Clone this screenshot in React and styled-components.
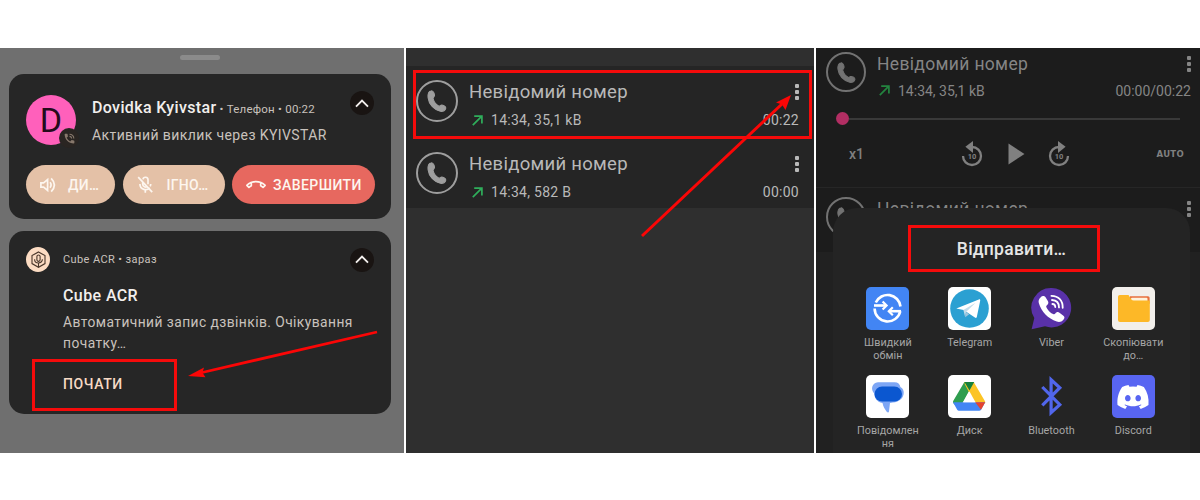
import styled, { createGlobalStyle } from "styled-components";
import { FaDiscord } from "react-icons/fa";
import { MdPhoneInTalk, MdOutlineCallEnd } from "react-icons/md";

const GlobalStyle = createGlobalStyle`
    * {
        box-sizing: border-box;
    }
    body {
        margin: 0;
        background: #ffffff;
        font-family: Roboto, "Liberation Sans", sans-serif;
    }
`;

const Page = styled.main`
    position: relative;
    width: 1200px;
    height: 500px;
    padding: 48px 0 47px;
    display: flex;
    gap: 2px;
    overflow: hidden;
`;

/* ---------- notifications ---------- */

const ShadePanel = styled.section`
    width: 404px;
    height: 405px;
    padding: 7px 13px 0 9px;
    background: #6f6f6f;
`;

const Handle = styled.div`
    width: 40px;
    height: 5px;
    margin: 0 auto 14px 171px;
    border-radius: 3px;
    background: #8b8b8b;
`;

const Card = styled.article`
    height: ${(props) => props.$height}px;
    margin-bottom: 12px;
    padding: 16px 16px 0 17px;
    border-radius: 15px;
    background: #262626;
    color: #c9c2bd;
`;

const CallHeader = styled.div`
    display: flex;
    padding-top: 5px;
    height: 75px;
`;

const Avatar = styled.div`
    position: relative;
    width: 50px;
    height: 50px;
    border-radius: 50%;
    background: #ff60bb;
    color: #260b1b;
    font-size: 34px;
    line-height: 50px;
    text-align: center;
    margin-right: 16px;
`;

const AvatarBadge = styled.span`
    position: absolute;
    left: 33px;
    top: 33px;
    width: 20px;
    height: 20px;
    border-radius: 50%;
    background: #2a2522;
    color: #87786c;
    display: flex;
    align-items: center;
    justify-content: center;
    font-size: 13px;
`;

const CallText = styled.div`
    flex: 1;
    white-space: nowrap;
`;

const Caller = styled.div`
    height: 26px;
    line-height: 26px;
    font-size: 11.5px;
    letter-spacing: 0.22px;
    strong {
        color: #f2efed;
        font-size: 16px;
        font-weight: 500;
        letter-spacing: 0.35px;
    }
`;

const CallInfo = styled.div`
    line-height: 28px;
    font-size: 14px;
    letter-spacing: 0.4px;
`;

const ChevronCircle = styled.span`
    width: 24px;
    height: 24px;
    margin: ${(props) => props.$top || 0}px 1px 0 auto;
    border-radius: 50%;
    background: #191412;
    display: flex;
    align-items: center;
    justify-content: center;
`;

const CallActions = styled.div`
    display: grid;
    grid-template-columns: 89px 102px 143px;
    column-gap: 7.5px;
`;

const CallButton = styled.button`
    height: 39px;
    border: 0;
    padding: 0 0 0 ${(props) => props.$pad}px;
    border-radius: 20px;
    background: ${(props) => (props.$danger ? "#e7685f" : "#e4c1a7")};
    color: #fdf6ef;
    display: flex;
    align-items: center;
    gap: ${(props) => props.$gap}px;
    font: 500 14px Roboto, sans-serif;
    letter-spacing: ${(props) => (props.$danger ? 0.45 : 0.3)}px;
    white-space: nowrap;
    svg {
        flex: none;
    }
`;

const AppHeader = styled.div`
    display: flex;
    height: 25px;
    line-height: 26px;
    align-items: center;
    font-size: 11px;
    letter-spacing: 0.4px;
`;

const AppIcon = styled.span`
    width: 24px;
    height: 25px;
    margin-right: 13px;
    border-radius: 50%;
    background: #fcdcc3;
    display: flex;
    align-items: center;
    justify-content: center;
`;

const AppBody = styled.div`
    padding-left: 37px;
    white-space: nowrap;
`;

const AppTitle = styled.div`
    margin-top: 12.5px;
    line-height: 22px;
    color: #f2efed;
    font-size: 16px;
    font-weight: 500;
    letter-spacing: 0.4px;
`;

const AppMessage = styled.p`
    margin: 5.5px 0 0;
    font-size: 13.8px;
    line-height: 21px;
    letter-spacing: 0.44px;
`;

const StartButton = styled.div`
    margin-top: 19px;
    line-height: 22px;
    color: #f7dac5;
    font-size: 14px;
    font-weight: 500;
    letter-spacing: 0.6px;
`;

/* ---------- recordings ---------- */

const ListPanel = styled.section`
    width: 408px;
    height: 405px;
    padding-top: 18px;
    background: #2f2f2f;
`;

const Recording = styled.div`
    height: ${(props) => props.$height || 72}px;
    padding: ${(props) => props.$pad || "14px 15px 0 10px"};
    display: flex;
    background: ${(props) => (props.$dim ? "#1c1c1c" : "#252525")};
    color: ${(props) => (props.$dim ? "#858585" : "#b9b9b9")};
`;

const PhoneCircle = styled.span`
    flex: none;
    width: ${(props) => props.$size}px;
    height: ${(props) => props.$size}px;
    border: 2px solid currentColor;
    border-radius: 50%;
    display: flex;
    align-items: center;
    justify-content: center;
    opacity: 0.82;
`;

const RecordingText = styled.div`
    flex: 1;
    margin-left: 11px;
    white-space: nowrap;
`;

const RecordingTitle = styled.div`
    display: flex;
    justify-content: space-between;
    height: 23px;
    line-height: 25px;
    font-size: ${(props) => (props.$dim ? 17.5 : 18.5)}px;
    letter-spacing: ${(props) => (props.$dim ? 0.33 : 0.28)}px;
`;

const RecordingMeta = styled.div`
    display: flex;
    align-items: center;
    margin-top: ${(props) => (props.$dim ? 2.5 : 4)}px;
    height: 26px;
    padding-left: ${(props) => (props.$dim ? 2 : 3)}px;
    font-size: 14px;
    letter-spacing: ${(props) => (props.$dim ? 0 : 0.28)}px;
    span {
        margin-left: 8px;
    }
    time {
        margin-left: auto;
    }
`;

const Dots = styled.span`
    display: flex;
    flex-direction: column;
    gap: 2px;
    margin-top: 4px;
    i {
        width: 4px;
        height: 4px;
        border-radius: 1px;
        background: currentColor;
    }
`;

/* ---------- player + share sheet ---------- */

const PlayerPanel = styled.section`
    position: relative;
    width: 384px;
    height: 405px;
    background: #212121;
    overflow: hidden;
`;

const Player = styled.div`
    height: 76px;
    padding: 0 20px;
    background: #1c1c1c;
    border-bottom: 1px solid #262626;
    color: #808080;
`;

const Track = styled.div`
    display: flex;
    align-items: center;
    height: 13px;
    &::before {
        content: "";
        width: 13px;
        height: 13px;
        border-radius: 50%;
        background: #b22e63;
    }
    &::after {
        content: "";
        flex: 1;
        height: 2px;
        background: #393939;
    }
`;

const Controls = styled.div`
    display: grid;
    grid-template-columns: 1fr 24px 19px 24px 1fr;
    column-gap: 22px;
    align-items: center;
    height: 58px;
    padding-left: 14px;
    font-size: 14px;
    font-weight: 500;
    > span {
        margin-left: -1px;
    }
    em {
        font: 700 8.5px "DejaVu Sans", sans-serif;
        letter-spacing: 0.3px;
        text-align: right;
        margin-right: -4px;
    }
`;

const Sheet = styled.div`
    position: absolute;
    left: 17px;
    top: 160px;
    width: 357px;
    height: 245px;
    padding-top: 28px;
    border-radius: 24px 24px 0 0;
    background: #242424;
`;

const SheetTitle = styled.h2`
    margin: 0;
    color: #e6e6e6;
    font-size: 17.5px;
    font-weight: 500;
    line-height: 27px;
    letter-spacing: 0.25px;
    text-align: center;
`;

const ShareGrid = styled.div`
    display: grid;
    grid-template-columns: repeat(4, 81.8px);
    grid-template-rows: 88px 78px;
    padding: 24px 0 0 14px;
`;

const ShareItem = styled.div`
    display: flex;
    flex-direction: column;
    align-items: center;
    color: #a6a6a6;
    font-size: 10.8px;
    line-height: 12.8px;
    letter-spacing: 0.03px;
    text-align: center;
    white-space: pre;
    > svg {
        display: block;
        flex: none;
        margin-bottom: 7px;
    }
`;

/* ---------- marks over the panels ---------- */

const MarkBox = styled.div`
    position: absolute;
    left: ${(props) => props.$x}px;
    top: ${(props) => props.$y}px;
    width: ${(props) => props.$w}px;
    height: ${(props) => props.$h}px;
    border: 3px solid #f50b0b;
`;

const MarkArrows = styled.svg`
    position: absolute;
    left: 0;
    top: 0;
    pointer-events: none;
`;

/* ---------- icons ---------- */

const Chevron = () => (
    <svg width="14" height="9" viewBox="0 0 14 9" fill="none" stroke="#f4f0ee" strokeWidth="1.9">
        <path d="M1 7.7 7 1.7l6 6" />
    </svg>
);

const SpeakerIcon = () => (
    <svg width="16" height="16" viewBox="0 0 16 16" fill="none" stroke="currentColor" strokeWidth="1.7">
        <path d="M.9 5.9h2.7L7.6 2.6v10.8L3.6 10.1H.9z" />
        <path d="M10 5.3q2.2 2.7 0 5.4M11.2 1.4q6.4 6.6 0 13.2" />
    </svg>
);

const MicOffIcon = () => (
    <svg width="17" height="18" viewBox="0 0 17 18" fill="none" stroke="currentColor" strokeWidth="1.7">
        <path d="M1.2 1.2l14 15M5.7 5.5V8c0 2.8 3 3.8 4.5 2.4M6 3.4c.4-3 5-2.8 5 .4v4.4" />
        <path d="M2.9 8c0 5.8 7.3 7.2 9.7 3.8M13.7 8c0 .8-.2 1.6-.5 2.3M8.3 13.4v3.4" />
    </svg>
);

const CubeMicIcon = () => (
    <svg width="17" height="18" viewBox="0 0 17 18" fill="none" stroke="#4a372b" strokeWidth="1.1">
        <path d="M8.5 1 15 4.6v8L8.5 16.3 2 12.6v-8z" />
        <path d="M4.6 8.2c0 5 7.8 5 7.8 0M8.5 12v4.3" />
        <rect x="6.9" y="4" width="3.2" height="6.4" rx="1.6" />
    </svg>
);

const HandsetIcon = ({ size }) => (
    <svg width={size} height={size} viewBox="0 0 25 25" fill="currentColor" stroke="currentColor" strokeWidth="1.1" strokeLinejoin="round">
        <path d="M6.5 1.8C4 2 2.8 5 3.2 9 4 16 9.5 21.700 16 23.200c3 .5 5.500-1 5.700-3.400 0-1.700-3.500-3.600-5-2.900-1 .6-1.500 1.300-2.500.8-3-1.500-5-4.700-5.700-7.400C8.200 8.900 9.700 8.200 9.900 6.800c.1-2-1.600-5.200-3.400-5z" />
    </svg>
);

const OutgoingIcon = ({ dim }) => (
    <svg width="11" height="11" viewBox="0 0 11 11" fill="none" stroke={dim ? "#23843f" : "#2fae5b"} strokeWidth="1.7">
        <path d="M.8 10.2 9.6 1.4M2.2 1.2h7.7v7.4" />
    </svg>
);

const SeekIcon = ({ forward }) => (
    <svg width="24" height="26" viewBox="0 0 24 26">
        <g transform={forward ? "matrix(-1 0 0 1 24 0)" : undefined}>
            <path
                d="M12 6a9 9 0 1 1-9 9"
                fill="none"
                stroke="currentColor"
                strokeWidth="2.3"
            />
            <path d="M13 0v12L5.4 5.8z" fill="currentColor" />
        </g>
        <text x="12" y="18" textAnchor="middle" fontFamily="Roboto, sans-serif" fontSize="7.5" fontWeight="700" fill="currentColor">
            10
        </text>
    </svg>
);

const PlayIcon = () => (
    <svg width="19" height="22" viewBox="0 0 19 22">
        <path d="M2.5.5v21L18.5 11z" fill="currentColor" />
    </svg>
);

const QuickShareIcon = () => (
    <svg width="43" height="43" viewBox="0 0 43 43">
        <rect width="43" height="43" rx="5" fill="#4285f4" />
        <g fill="none" stroke="#fff" strokeWidth="2.6">
            <path d="M9.8 15.5A13 13 0 0 1 34.5 19.5" />
            <path d="M35 24.2H23" />
            <path d="M34.3 24.2A13 13 0 0 1 8.6 21.5" />
            <path d="M8 18.5h12" />
            <path d="m16.600 14.500 4 4-4 4M26.800 20.200l-4 4 4 4" strokeWidth="2.2" />
        </g>
    </svg>
);

const TelegramIcon = () => (
    <svg width="43" height="43" viewBox="0 0 43 43">
        <rect width="43" height="43" rx="5" fill="#fff" />
        <circle cx="21.5" cy="21.5" r="19.3" fill="#2ba0d2" />
        <path d="M8.3 21.4 30.8 12.4c1-.4 1.6.2 1.4 1.3l-3.4 16.2c-.3 1.1-1 1.3-1.9.7L15.6 23z" fill="#fff" />
        <path d="M15.4 23.1 27.6 15.8 18 24.9l-.8 5.3z" fill="#c3dcea" />
        <path d="m17.2 30.2.8-5.2 3.2 2.2z" fill="#9fc5dc" />
    </svg>
);

const ViberIcon = () => (
    <svg width="43" height="43" viewBox="0 0 43 43">
        <path d="M21.8 1A19.7 19.7 0 1 1 15 39.3L1.6 42.2 4.3 31A19.7 19.7 0 0 1 21.8 1z" fill="#5931a8" />
        <path
            d="M10.5 10.5c1.8-2 4.2-1.8 5.5.4l2 3.4c.8 1.6.3 2.9-1.3 4.2-.8.7-.6 1.6.5 3.2 1.6 2.5 3.6 4.2 5.9 5.4 1 .5 1.6.3 2.2-.5 1.3-1.8 2.6-2 4.5-.7l3.3 2.6c1.8 1.4 1.7 2.6.3 4.3-1.8 2.1-4.2 2.8-6.6 1.8C17.9 31.4 11.5 25 8.8 16c-.5-2-.1-3.8 1.700-5.500z"
            fill="#fff"
        />
        <path
            d="M21.4 8.8c7.2.2 11.5 4.8 11.3 12M22 13c4.5.2 7 2.8 7 7.4M22.4 17c1.8.1 2.8 1 2.9 3"
            fill="none"
            stroke="#fff"
            strokeWidth="1.8"
            strokeLinecap="round"
        />
    </svg>
);

const FolderIcon = () => (
    <svg width="43" height="43" viewBox="0 0 43 43">
        <rect width="43" height="43" rx="5" fill="#f2efeb" />
        <path d="M18 9.2h18q1.6 0 1.6 1.6v6H18z" fill="#e8703f" />
        <rect x="19" y="10.8" width="16.5" height="5" rx="1" fill="#fff3dc" />
        <path d="M6 9.8Q6 8 7.8 8h8.7l2.7 4.2q1 1.4 2.6 1.4h16V33q0 2-2 2H8q-2 0-2-2z" fill="#fdb827" />
    </svg>
);

const MessagesIcon = () => (
    <svg width="43" height="43" viewBox="0 0 43 43">
        <rect width="43" height="43" rx="5" fill="#fff" />
        <path
            d="M12 7.3h16.500c3.600 0 5.300 2 5.900 4.700 2.700 1.400 3.800 4.200 3.200 7.300-1.200 5.700-6 8.200-13.600 8.600l-1 8.600c-.3 1.400-1.500 1.200-2.300.2-1.800-2.400-3.600-5.300-4.200-8.700C10.500 27 8.400 22.500 8.300 18.500 4.500 15 5.500 8 12 7.300z"
            fill="#7da6f5"
        />
        <rect x="8.5" y="11.4" width="27.5" height="15.2" rx="7.6" fill="#0b57d0" />
    </svg>
);

const DriveIcon = () => (
    <svg width="43" height="43" viewBox="0 0 43 43">
        <rect width="43" height="43" rx="5" fill="#fff" />
        <path d="M16.4 7h9.8l-5 8.7L11 34.3 5.2 28q-.5-1 0-2z" fill="#2f9e4f" />
        <path d="M16.4 7h8q1.3 0 2 1.2L37 26.2q.6 1 0 2l-11-1.4L16.9 9.4z" fill="#fcc425" />
        <path d="M16.4 7h9.8l-4.7 8.5z" fill="#16803c" />
        <path d="M5 27.2h32.2L33 34.8q-.5 1-1.8 1H11q-1.2 0-1.8-1z" fill="#4285f4" />
        <path d="M27.2 27.2h10l-4.2 7.6z" fill="#e5432f" />
        <path d="m21.4 16.2 6.1 11H15.3z" fill="#fff" />
    </svg>
);

const BluetoothIcon = () => (
    <svg width="43" height="43" viewBox="0 0 43 43" fill="none" stroke="#5166ec" strokeWidth="3.2">
        <path d="m12.3 12 17.5 17.7-8.7 8V4.7l8.7 8-17.5 17.6" />
    </svg>
);

const DiscordTile = styled.span`
    width: 43px;
    height: 43px;
    margin-bottom: 7px;
    border-radius: 5px;
    background: #5865f2;
    color: #ffffff;
    display: flex;
    align-items: center;
    justify-content: center;
    font-size: 34px;
`;

const DiscordIcon = () => (
    <DiscordTile>
        <FaDiscord />
    </DiscordTile>
);

const apps = [
    { name: "Швидкий\nобмін", Icon: QuickShareIcon },
    { name: "Telegram", Icon: TelegramIcon },
    { name: "Viber", Icon: ViberIcon },
    { name: "Скопіювати\nдо…", Icon: FolderIcon },
    { name: "Повідомлен\nня", Icon: MessagesIcon },
    { name: "Диск", Icon: DriveIcon },
    { name: "Bluetooth", Icon: BluetoothIcon },
    { name: "Discord", Icon: DiscordIcon },
];

const RecordingRow = ({ size, time, dim, height, pad }) => (
    <Recording $dim={dim} $height={height} $pad={pad}>
        <PhoneCircle $size={dim ? 40 : 42}>
            <HandsetIcon size={dim ? 23 : 24} />
        </PhoneCircle>
        <RecordingText>
            <RecordingTitle $dim={dim}>
                Невідомий номер
                <Dots>
                    <i />
                    <i />
                    <i />
                </Dots>
            </RecordingTitle>
            {size && (
                <RecordingMeta $dim={dim}>
                    <OutgoingIcon dim={dim} />
                    <span>14:34, {size}</span>
                    <time>{time}</time>
                </RecordingMeta>
            )}
        </RecordingText>
    </Recording>
);

const App = () => {
    return (
        <Page>
            <GlobalStyle />
            <ShadePanel>
                <Handle />
                <Card $height={145}>
                    <CallHeader>
                        <Avatar>
                            D
                            <AvatarBadge>
                                <MdPhoneInTalk />
                            </AvatarBadge>
                        </Avatar>
                        <CallText>
                            <Caller>
                                <strong>Dovidka Kyivstar</strong> • Телефон • 00:22
                            </Caller>
                            <CallInfo>Активний виклик через KYIVSTAR</CallInfo>
                        </CallText>
                        <ChevronCircle $top={-4}>
                            <Chevron />
                        </ChevronCircle>
                    </CallHeader>
                    <CallActions>
                        <CallButton $pad={14} $gap={12}>
                            <SpeakerIcon />
                            ДИ…
                        </CallButton>
                        <CallButton $pad={14} $gap={13}>
                            <MicOffIcon />
                            ІГНО…
                        </CallButton>
                        <CallButton $danger $pad={14} $gap={7}>
                            <MdOutlineCallEnd size={20} />
                            ЗАВЕРШИТИ
                        </CallButton>
                    </CallActions>
                </Card>
                <Card $height={183}>
                    <AppHeader>
                        <AppIcon>
                            <CubeMicIcon />
                        </AppIcon>
                        Cube ACR • зараз
                        <ChevronCircle>
                            <Chevron />
                        </ChevronCircle>
                    </AppHeader>
                    <AppBody>
                        <AppTitle>Cube ACR</AppTitle>
                        <AppMessage>
                            Автоматичний запис дзвінків. Очікування
                            <br />
                            початку…
                        </AppMessage>
                        <StartButton>ПОЧАТИ</StartButton>
                    </AppBody>
                </Card>
            </ShadePanel>

            <ListPanel>
                <RecordingRow size="35,1 kB" time="00:22" />
                <RecordingRow size="582 B" time="00:00" height={70} />
            </ListPanel>

            <PlayerPanel>
                <RecordingRow dim size="35,1 kB" time="00:00/00:22" height={64} pad="4px 9px 0 10px" />
                <Player>
                    <Track />
                    <Controls>
                        <span>x1</span>
                        <SeekIcon />
                        <PlayIcon />
                        <SeekIcon forward />
                        <em>AUTO</em>
                    </Controls>
                </Player>
                <RecordingRow dim height={64} pad="9px 9px 0 10px" />
                <Sheet>
                    <SheetTitle>Відправити…</SheetTitle>
                    <ShareGrid>
                        {apps.map(({ name, Icon }) => (
                            <ShareItem key={name}>
                                <Icon />
                                {name}
                            </ShareItem>
                        ))}
                    </ShareGrid>
                </Sheet>
            </PlayerPanel>

            <MarkBox $x={32} $y={359} $w={145} $h={52} />
            <MarkBox $x={413} $y={70} $w={399} $h={69} />
            <MarkBox $x={908} $y={225} $w={192} $h={47} />
            <MarkArrows width="1200" height="500" viewBox="0 0 1200 500" stroke="#fb0606" fill="#fb0606">
                <path d="M377 332 200 373" strokeWidth="2.8" />
                <path d="m188 376 16-8.500-1.500 5.200 3 4.600z" stroke="none" />
                <path d="M642 236 782 104" strokeWidth="3" />
                <path d="m791 95-5.500 15-3.500-5.500-6-2z" stroke="none" />
            </MarkArrows>
        </Page>
    );
};

export default App;
